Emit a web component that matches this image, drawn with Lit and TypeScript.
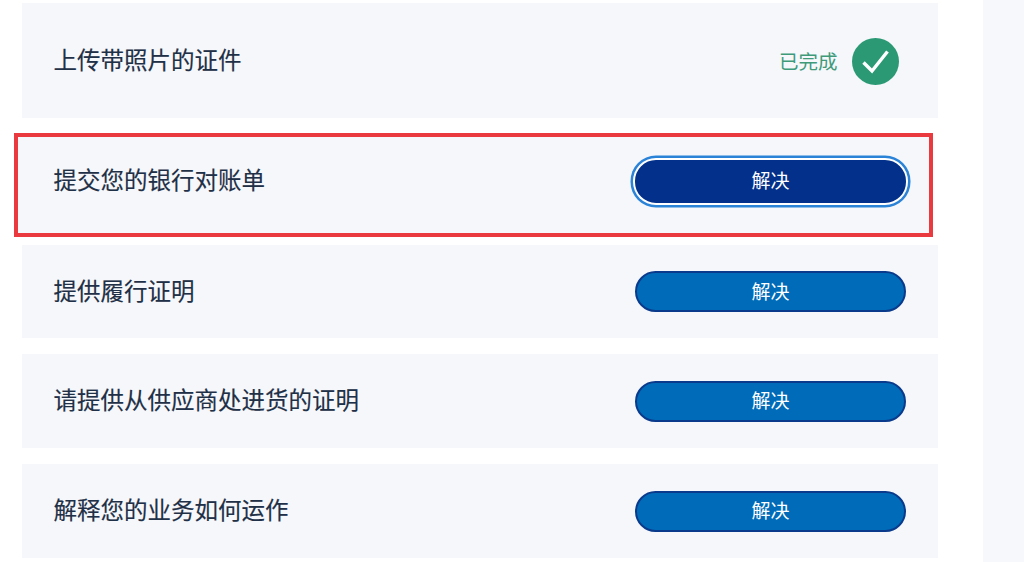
import { LitElement, html, css } from "lit";
import { customElement } from "lit/decorators.js";
import { classMap } from "lit/directives/class-map.js";

interface Task { label: string; kind: "done" | "action"; focused?: boolean }

const TASKS: Task[] = [
  { label: "上传带照片的证件", kind: "done" },
  { label: "提交您的银行对账单", kind: "action", focused: true },
  { label: "提供履行证明", kind: "action" },
  { label: "请提供从供应商处进货的证明", kind: "action" },
  { label: "解释您的业务如何运作", kind: "action" },
];

@customElement("app-root")
export class AppRoot extends LitElement {
  static styles = css`
    :host {
      display: flex;
      width: 1024px;
      height: 562px;
      overflow: hidden;
      background: #fff;
      font-family: "Noto Sans CJK SC", "Liberation Sans", sans-serif;
    }
    .list {
      box-sizing: border-box;
      width: 983px;
      flex: none;
      padding: 3px 45px 0 22px;
      display: flex;
      flex-direction: column;
    }
    .row {
      box-sizing: border-box;
      display: flex;
      align-items: center;
      justify-content: space-between;
      height: 94px;
      margin-top: 16px;
      padding: 0 32px 0 31.5px;
      background: #f5f7fa;
    }
    .row:first-child {
      height: 115px;
      margin-top: 0;
      padding-right: 39.5px;
    }
    .row:nth-child(3) {
      height: 93px;
      margin-top: 8px;
    }
    .row.focused {
      height: 104px;
      width: 919.5px;
      margin: 15px 0 0 -8.5px;
      padding: 0 23px 8px 36px;
      border: 4px solid #ea3a3f;
    }
    .label {
      padding-bottom: 4px;
      font-size: 23.5px;
      line-height: 32px;
      color: #1f3047;
      -webkit-text-stroke: 0.15px #1f3047;
    }
    .status {
      display: flex;
      align-items: center;
      gap: 14px;
      padding-top: 2px;
    }
    .status-text {
      padding-bottom: 3px;
      font-size: 19.5px;
      color: #3f9a7a;
    }
    .check {
      display: block;
      width: 47px;
      height: 47px;
    }
    .btn {
      box-sizing: border-box;
      width: 271px;
      height: 41px;
      padding: 0 0 3px;
      border: 2.5px solid #0a3a8c;
      border-radius: 21px;
      background: #006bb8;
      color: #fff;
      font: inherit;
      font-size: 19px;
      line-height: 1;
    }
    .btn.focused {
      height: 43px;
      border-color: #03308a;
      background: #03308a;
      box-shadow: 0 0 0 2px #fff, 0 0 0 4.5px #2b83d8;
    }
    .side {
      flex: 1;
      background: #f7f8fc;
    }
  `;

  private renderEnd(t: Task) {
    if (t.kind === "done") {
      return html`<div class="status">
        <span class="status-text">已完成</span>
        <svg class="check" viewBox="0 0 47 47" aria-hidden="true">
          <circle cx="23.5" cy="23.5" r="23.5" fill="#2b9a74"></circle>
          <path d="M11.5 24.5 L20 33 L35.5 13.5" fill="none" stroke="#fff" stroke-width="3.4"></path>
        </svg>
      </div>`;
    }
    return html`<button class=${classMap({ btn: true, focused: !!t.focused })}>解决</button>`;
  }

  render() {
    return html`
      <div class="list">
        ${TASKS.map(
          (t) => html`<div class=${classMap({ row: true, focused: !!t.focused })}>
            <span class="label">${t.label}</span>
            ${this.renderEnd(t)}
          </div>`
        )}
      </div>
      <div class="side"></div>
    `;
  }
}
